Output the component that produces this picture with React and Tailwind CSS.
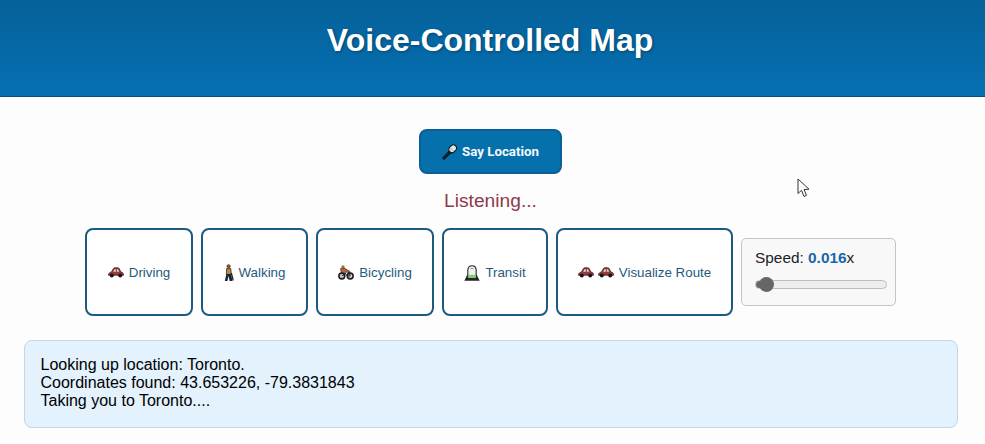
const MODES = [
  { label: "Driving", width: "w-[108px]", icons: ["car"] },
  { label: "Walking", width: "w-[107px]", icons: ["walk"] },
  { label: "Bicycling", width: "w-[118px]", icons: ["bike"] },
  { label: "Transit", width: "w-[106px]", icons: ["transit"] },
  { label: "Visualize Route", width: "w-[177px]", icons: ["car", "car"] },
];

function CarIcon() {
  return (
    <svg width="16" height="11" viewBox="0 0 16 11" aria-hidden="true">
      <path d="M0.5 8.2 C0.5 6 2 5.4 3.5 5 L5.4 1.6 C5.8 1 6.2 0.8 7 0.8 L9.6 0.8 C10.4 0.8 10.9 1 11.2 1.6 L12.8 5 C14.6 5.3 15.5 6 15.5 8.2 Z" fill="#983a3a" stroke="#3c1a1e" strokeWidth="0.8" />
      <path d="M5.2 4.8 L6.4 2.2 L7.8 2.2 L7.8 4.8 Z M8.8 2.2 L10 2.2 L11.2 4.8 L8.8 4.8 Z" fill="#dcd2d2" />
      <circle cx="3.8" cy="8.6" r="2" fill="#16161a" />
      <circle cx="12.2" cy="8.6" r="2" fill="#16161a" />
    </svg>
  );
}

function WalkIcon() {
  return (
    <svg width="10" height="18" viewBox="0 0 10 18" aria-hidden="true">
      <circle cx="4.6" cy="2.2" r="2" fill="#7c5030" />
      <path d="M2.6 4.6 L6.8 4.6 L7.2 10.5 L2.4 10.5 Z" fill="#c08a3c" stroke="#2e241e" strokeWidth="0.8" />
      <path d="M2.4 10 L0.8 17 L3.4 17 L4.6 12 L5.6 17 L8.4 17 L7.2 10 Z" fill="#16283c" />
      <path d="M7.4 9 L9.2 16.5" stroke="#1c1c1c" strokeWidth="1.2" />
    </svg>
  );
}

function BikeIcon() {
  return (
    <svg width="16" height="15" viewBox="0 0 16 15" aria-hidden="true">
      <circle cx="5" cy="1.9" r="1.7" fill="#a86c3c" />
      <path d="M2.5 3.8 C4.5 3 7.5 3.2 9 4.8 L12 6.4 L11 7.8 L8 6.8 L7.4 9 L3.6 8.4 Z" fill="#b4693a" stroke="#3c2518" strokeWidth="0.7" />
      <circle cx="3.8" cy="11" r="2.9" fill="#d8d8da" stroke="#1c1c20" strokeWidth="1.6" />
      <circle cx="12.2" cy="11" r="2.9" fill="#d8d8da" stroke="#1c1c20" strokeWidth="1.6" />
      <path d="M3.8 11 L7.4 8.6 L9.2 11 L12.2 11 L11 7" fill="none" stroke="#1c1c20" strokeWidth="1" />
    </svg>
  );
}

function TransitIcon() {
  return (
    <svg width="16" height="16" viewBox="0 0 16 16" aria-hidden="true">
      <path d="M0.3 15.7 L3.4 9.5 L12.6 9.5 L15.7 15.7 Z" fill="#24242a" />
      <path d="M3.8 5.5 C3.8 2.2 5.5 0.7 8 0.7 C10.5 0.7 12.2 2.2 12.2 5.5 L12.2 12 C12.2 12.9 11.6 13.5 10.8 13.5 L5.2 13.5 C4.4 13.5 3.8 12.9 3.8 12 Z" fill="#eef2ee" stroke="#24242a" strokeWidth="1.1" />
      <path d="M4.4 9.8 L11.6 9.8 L11.6 12 C11.6 12.5 11.2 13 10.7 13 L5.3 13 C4.8 13 4.4 12.5 4.4 12 Z" fill="#86cc72" />
      <path d="M6.4 3.4 L9.6 3.4" stroke="#8f9890" strokeWidth="1" />
    </svg>
  );
}

function MicIcon() {
  return (
    <svg width="16" height="16" viewBox="0 0 16 16" aria-hidden="true">
      <path d="M1 15 L0.8 13.6 L7 7.2 L8.8 9 L2.4 15.2 Z" fill="#10202c" stroke="#0a1620" strokeWidth="1" />
      <path d="M7 7 L10 10" stroke="#0a1620" strokeWidth="0.8" />
      <rect x="6.6" y="1.6" width="8.2" height="6.4" rx="3.2" transform="rotate(-45 10.7 4.8)" fill="#dfe4e9" stroke="#0a1620" strokeWidth="1.1" />
      <path d="M8.6 4.2 L11.2 6.8" stroke="#8b96a1" strokeWidth="0.8" />
    </svg>
  );
}

const ICONS = { car: CarIcon, walk: WalkIcon, bike: BikeIcon, transit: TransitIcon };

export default function App() {
  return (
    <div className="relative min-h-[444px] overflow-hidden bg-[#fdfdfe] font-['Liberation_Sans',Arial,sans-serif] text-black">
      <header className="flex h-[97px] justify-center border-b border-[#0a4d78] bg-gradient-to-b from-[#05619a] to-[#0670b2] pt-[18px] pr-[5px]">
        <h1 className="text-[32px] leading-[44px] font-bold text-white [text-shadow:1px_1px_3px_rgba(0,0,0,0.35)]">
          Voice-Controlled Map
        </h1>
      </header>

      <main className="flex flex-col items-center pt-8 pr-[4px]">
        <button className="flex h-[45px] w-[143px] items-center justify-center gap-[4px] rounded-lg border-2 border-[#0a5f96] bg-[#0670ad] pt-[1px] font-['Roboto',sans-serif] text-[13.3px] font-bold text-[#f2f8fc]">
          <MicIcon />
          Say Location
        </button>

        <p className="mt-[15px] text-[19.2px] leading-[24px] text-[#8c3b4c]">Listening...</p>

        <div className="mt-[15px] flex items-center justify-center gap-2">
          {MODES.map((mode) => (
            <button
              key={mode.label}
              className={`flex h-[88px] items-center justify-center gap-[4px] rounded-lg border-2 border-[#1c5a80] bg-white pt-[1px] text-[13.33px] text-[#1f5a80] ${mode.width}`}
            >
              {mode.icons.map((name, i) => {
                const Icon = ICONS[name];
                return <Icon key={i} />;
              })}
              <span className="ml-[1px]">{mode.label}</span>
            </button>
          ))}

          <div className="h-[68px] w-[155px] rounded-[5px] border border-[#c4c4c4] bg-[#f8f8f9] px-[13px] pt-[9px]">
            <p className="text-[15.4px] leading-[20px] text-[#222]">
              Speed: <span className="font-bold text-[#1a66ab]">0.016</span>x
            </p>
            <input
              type="range"
              min="0"
              max="100"
              defaultValue="0"
              className="mt-[12px] block h-[9px] w-[132px] appearance-none rounded-full border border-[#bdbdbd] bg-[#eeeeee] bg-[linear-gradient(#666,#666)] bg-[length:10px_100%] bg-no-repeat [&::-webkit-slider-thumb]:h-[15px] [&::-webkit-slider-thumb]:w-[15px] [&::-webkit-slider-thumb]:translate-x-[3px] [&::-webkit-slider-thumb]:appearance-none [&::-webkit-slider-thumb]:rounded-full [&::-webkit-slider-thumb]:bg-[#666]"
            />
          </div>
        </div>

        <div className="mt-6 h-[88px] w-[934px] rounded-lg border border-[#c3d6e6] bg-[#e3f2fd] px-4 pt-[15px] text-[16px] leading-[18px]">
          <p>Looking up location: Toronto.</p>
          <p>Coordinates found: 43.653226, -79.3831843</p>
          <p>Taking you to Toronto....</p>
        </div>
      </main>

      <svg className="absolute top-[178px] left-[797px]" width="14" height="20" viewBox="0 0 14 20" aria-hidden="true">
        <path d="M1 1 L1 15.5 L4.5 12.3 L7 18.5 L9.5 17.4 L7 11.5 L12 11.2 Z" fill="#ffffff" stroke="#333" strokeWidth="1" />
      </svg>
    </div>
  );
}
